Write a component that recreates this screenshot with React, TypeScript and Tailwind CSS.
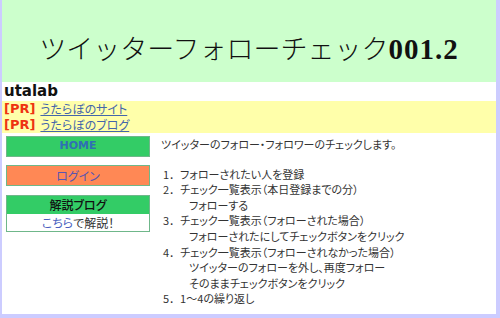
import React from 'react';

// 手順の一覧（インデント付きの行は sub）
const steps: { num?: string; text: string; sub?: boolean }[] = [
  { num: '1．', text: 'フォローされたい人を登録' },
  { num: '2．', text: 'チェック一覧表示（本日登録までの分）' },
  { text: 'フォローする', sub: true },
  { num: '3．', text: 'チェック一覧表示（フォローされた場合）' },
  { text: 'フォローされたにしてチェックボタンをクリック', sub: true },
  { num: '4．', text: 'チェック一覧表示（フォローされなかった場合）' },
  { text: 'ツイッターのフォローを外し、再度フォロー', sub: true },
  { text: 'そのままチェックボタンをクリック', sub: true },
  { num: '5．', text: '1～4の繰り返し' },
];

const jp = "font-['Noto_Sans_CJK_JP','Noto_Sans',sans-serif] [font-feature-settings:'palt']";

const App: React.FC = () => {
  return (
    <div className="w-[500px] h-[318px] bg-[#ccccff] pl-[2px] pr-[4px] pb-[4px] overflow-hidden">
      <div className="h-full bg-white flex flex-col">
        {/* ヘッダー */}
        <div className="h-[82px] bg-[#ccffcc] flex items-center justify-center pt-[16px]">
          <h1 className="leading-none text-[#111] font-['Liberation_Serif','Noto_Sans_CJK_JP',serif]">
            <span className="text-[27px] font-['Noto_Sans_CJK_JP',serif] font-light">ツイッターフォローチェック</span>
            <span className="text-[29px] font-bold tracking-[1px]">001.2</span>
          </h1>
        </div>

        {/* サイト名 */}
        <div className="h-[19px] px-[2px] flex items-end font-['DejaVu_Sans',sans-serif] font-bold text-[15px] leading-[19px] text-[#111]">
          utalab
        </div>

        {/* PR */}
        <div className="bg-[#ffffaa] px-[2px] py-0 text-[12px] leading-[16px]">
          <div className="flex items-center gap-[5px] h-[16px]">
            <span className="font-['DejaVu_Sans',sans-serif] font-bold text-[13px] text-[#ee3311]">[PR]</span>
            <a className={`${jp} text-[#4466aa] underline`}>うたらぼのサイト</a>
          </div>
          <div className="flex items-center gap-[5px] h-[16px]">
            <span className="font-['DejaVu_Sans',sans-serif] font-bold text-[13px] text-[#ee3311]">[PR]</span>
            <a className={`${jp} text-[#4466aa] underline`}>うたらぼのブログ</a>
          </div>
        </div>

        {/* 本文 */}
        <div className="flex pt-[3px]">
          {/* 左メニュー */}
          <div className="w-[144px] ml-[4px] flex flex-col gap-[8px]">
            <div className="h-[21px] bg-[#33cc66] border border-[#6fb78a] flex items-center justify-center">
              <span className="font-['DejaVu_Sans',sans-serif] font-bold text-[11px] text-[#2f6fb5]">HOME</span>
            </div>
            <div className="h-[21px] bg-[#ff8855] border border-[#6fb78a] flex items-center justify-center">
              <span className={`${jp} text-[12px] text-[#5a55b0]`}>ログイン</span>
            </div>
            <div className="border border-[#6fb78a] mt-[1px]">
              <div className={`${jp} h-[18px] bg-[#33cc66] flex items-center justify-center text-[12px] font-medium text-[#111]`}>
                解説ブログ
              </div>
              <div className={`${jp} h-[17px] bg-white flex items-center justify-center text-[12px] text-[#333]`}>
                <a className="text-[#4a5fc0]">こちら</a>で解説！
              </div>
            </div>
          </div>

          {/* 説明 */}
          <div className={`${jp} ml-[11px] pt-[1px] text-[11px] leading-[15.6px] text-[#333]`}>
            <p>ツイッターのフォロー・フォロワーのチェックします。</p>
            <p className="h-[14px]"></p>
            {steps.map((s, i) => (
              <p key={i} className={s.sub ? 'pl-[28px]' : 'pl-[2px]'}>
                {s.num && <span className="[font-feature-settings:normal]">{s.num}</span>}
                {s.text}
              </p>
            ))}
          </div>
        </div>
      </div>
    </div>
  );
};

export default App;
